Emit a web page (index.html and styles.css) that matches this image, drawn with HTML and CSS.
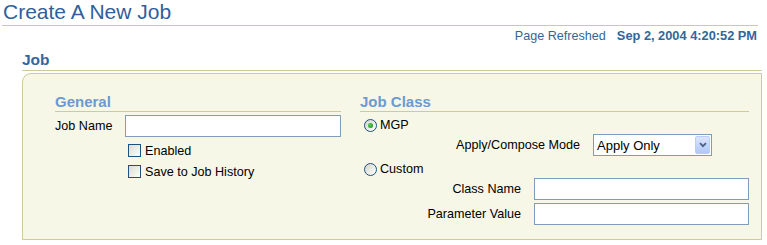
FILE: index.html
```html
<!DOCTYPE html>
<html>
<head>
<meta charset="utf-8">
<link rel="stylesheet" href="styles.css">
</head>
<body>
<h1 class="title">Create A New Job</h1>
<div class="refresh"><span>Page Refreshed</span><span class="date">Sep 2, 2004 4:20:52 PM</span></div>
<div class="section">
  <h2 class="section-head">Job</h2>
  <div class="box">
    <div class="col col-general">
      <h3 class="sub-head">General</h3>
      <div class="row row-name">
        <span class="lbl lbl-name">Job Name</span>
        <span class="input input-name"></span>
      </div>
      <div class="check-row first"><span class="checkbox"></span><span>Enabled</span></div>
      <div class="check-row"><span class="checkbox"></span><span>Save to Job History</span></div>
    </div>
    <div class="col col-class">
      <h3 class="sub-head">Job Class</h3>
      <div class="radio-row r-mgp"><span class="radio checked"></span><span>MGP</span></div>
      <div class="row row-mode">
        <span class="lbl lbl-mode">Apply/Compose Mode</span>
        <div class="select"><span class="sel-text">Apply Only</span><span class="sel-btn"><svg width="8" height="6" viewBox="0 0 8 6"><path d="M1 1.2 L4 4.2 L7 1.2" fill="none" stroke="#4d6185" stroke-width="1.8"/></svg></span></div>
      </div>
      <div class="radio-row r-custom"><span class="radio"></span><span>Custom</span></div>
      <div class="row row-cls">
        <span class="lbl lbl-cls">Class Name</span>
        <span class="input input-cls"></span>
      </div>
      <div class="row row-param">
        <span class="lbl lbl-cls">Parameter Value</span>
        <span class="input input-cls"></span>
      </div>
    </div>
  </div>
</div>
</body>
</html>
```
FILE: styles.css
```css
html, body {
  margin: 0;
  padding: 0;
  background: #ffffff;
  font-family: "Liberation Sans", Arial, sans-serif;
  color: #000000;
}

.title {
  margin: 0 9px 0 2px;
  padding-left: 1px;
  height: 25px;
  line-height: 24px;
  font-size: 21px;
  font-weight: normal;
  color: #2f5f9c;
  border-bottom: 1px solid #cccc99;
}

.refresh {
  display: flex;
  justify-content: flex-end;
  align-items: baseline;
  margin-top: 2px;
  padding-right: 10px;
  height: 16px;
  line-height: 16px;
  font-size: 12.6px;
  color: #336699;
}

.refresh .date {
  font-weight: bold;
  font-size: 12.8px;
  margin-left: 11px;
}

.section {
  margin: 0 5px 0 22px;
}

.section-head {
  margin: 6px 0 0 0;
  height: 20px;
  line-height: 20px;
  font-size: 15.5px;
  font-weight: bold;
  color: #336699;
  border-bottom: 1px solid #cccc99;
}

.box {
  margin-top: 2px;
  box-sizing: border-box;
  height: 167px;
  display: flex;
  gap: 19px;
  padding: 19px 12px 0 32px;
  background: #f7f7e7;
  border: 1px solid #cccc99;
  border-top-left-radius: 9px;
}

.col-general {
  width: 286px;
}

.col-class {
  flex: 1;
}

.sub-head {
  margin: 0;
  height: 18px;
  line-height: 18px;
  font-size: 15px;
  font-weight: bold;
  color: #6c9ad0;
  border-bottom: 1px solid #cccc99;
}

.row {
  display: flex;
  align-items: center;
  font-size: 12.6px;
}

.lbl {
  flex: none;
}

.lbl-name {
  width: 70px;
}

.lbl-mode {
  width: 220px;
  text-align: right;
  margin-right: 13px;
}

.lbl-cls {
  width: 161px;
  text-align: right;
  margin-right: 13px;
}

.input {
  display: block;
  box-sizing: border-box;
  height: 22px;
  background: #ffffff;
  border: 1px solid #7f9db9;
}

.row-name {
  margin-top: 3px;
}

.input-name {
  width: 216px;
}

.input-cls {
  width: 215px;
}

.check-row {
  display: flex;
  align-items: center;
  height: 21px;
  padding-left: 73px;
  font-size: 12.6px;
}

.check-row.first {
  margin-top: 3px;
}

.checkbox {
  display: block;
  flex: none;
  box-sizing: border-box;
  width: 13px;
  height: 13px;
  margin-right: 4px;
  border: 1px solid #1c5180;
  background: linear-gradient(135deg, #dcdcd7 0%, #eeeeea 55%, #ffffff 100%);
}

.radio-row {
  display: flex;
  align-items: center;
  height: 20px;
  padding-left: 4px;
  font-size: 12.6px;
}

.r-mgp {
  margin-top: 3px;
}

.r-custom {
  margin-top: 2px;
  height: 22px;
}

.radio {
  display: flex;
  align-items: center;
  justify-content: center;
  flex: none;
  box-sizing: border-box;
  width: 13px;
  height: 13px;
  margin-right: 3px;
  border: 1px solid #1c5180;
  border-radius: 50%;
  background: linear-gradient(135deg, #d4d4ce 0%, #ececE8 55%, #ffffff 100%);
}

.radio.checked::after {
  content: "";
  width: 5px;
  height: 5px;
  border-radius: 50%;
  background: radial-gradient(circle at 40% 40%, #5fd15f 0%, #21a121 70%);
}

.row-mode {
  margin-top: -1px;
}

.select {
  display: flex;
  align-items: center;
  justify-content: space-between;
  box-sizing: border-box;
  width: 119px;
  height: 22px;
  padding: 1px 1px 1px 3px;
  background: #ffffff;
  border: 1px solid #7f9db9;
  font-size: 13px;
}

.sel-btn {
  display: flex;
  align-items: center;
  justify-content: center;
  box-sizing: border-box;
  width: 15px;
  height: 18px;
  border: 1px solid #b9cdf5;
  border-radius: 2px;
  background: linear-gradient(180deg, #dce7fd 0%, #c5d6fb 50%, #b3c8f5 100%);
}

.row-cls {
  margin-top: -2px;
}

.row-param {
  margin-top: 3px;
}
```
